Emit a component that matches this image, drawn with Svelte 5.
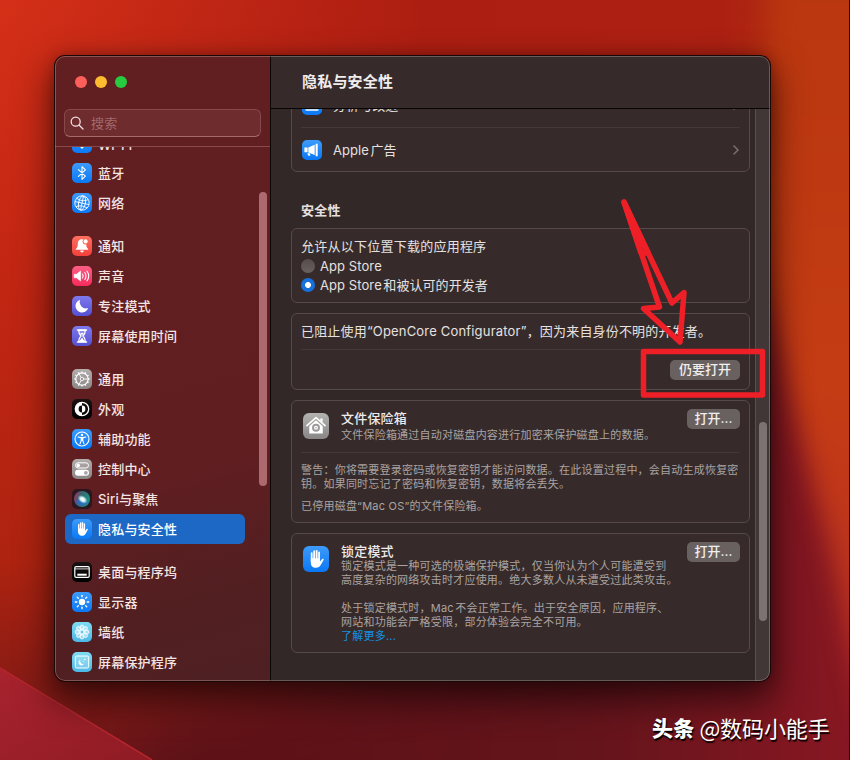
<script>
    let selected = $state("privacy");
    let source = $state("identified");

    const groups = [
        [
            { id: "wifi", label: "Wi-Fi" },
            { id: "bluetooth", label: "蓝牙" },
            { id: "network", label: "网络" }
        ],
        [
            { id: "bell", label: "通知" },
            { id: "sound", label: "声音" },
            { id: "focus", label: "专注模式" },
            { id: "time", label: "屏幕使用时间" }
        ],
        [
            { id: "general", label: "通用" },
            { id: "look", label: "外观" },
            { id: "access", label: "辅助功能" },
            { id: "control", label: "控制中心" },
            { id: "siri", label: "Siri与聚焦" },
            { id: "privacy", label: "隐私与安全性" }
        ],
        [
            { id: "dock", label: "桌面与程序坞" },
            { id: "display", label: "显示器" },
            { id: "wallpaper", label: "墙纸" },
            { id: "saver", label: "屏幕保护程序" }
        ]
    ];

    const petals = [0, 45, 90, 135, 180, 225, 270, 315];
    const teeth = [0, 30, 60, 90, 120, 150, 180, 210, 240, 270, 300, 330];
</script>

{#snippet hand()}
    <path d="M6.7 11.6V5.6M8.6 10.5V4M10.5 10.5V3.7M12.4 11V4.9" stroke="#fff" stroke-width="1.4" stroke-linecap="round" fill="none" />
    <path d="M6 9.5h7.1v2.5l1.5-1.9c.6-.7 1.6-.2 1.2.7l-2.2 3.9c-.8 1.5-1.8 2.1-3.6 2.1-2.6 0-4-1.6-4-4.2z" fill="#fff" />
{/snippet}

{#snippet icon(id)}
    <svg class="icon {id}" viewBox="0 0 20 20">
        {#if id === "wifi"}
            <path d="M3 8a10 10 0 0 1 14 0M5.5 11a6.4 6.4 0 0 1 9 0" stroke="#fff" stroke-width="1.6" fill="none" />
            <path d="M7.5 13.2a3.6 3.6 0 0 1 5 0L10 16z" fill="#fff" />
        {:else if id === "bluetooth"}
            <path d="M6.4 6.7l7 6.5L10 16.3V3.7l3.4 3.1-7 6.5" stroke="#fff" stroke-width="1.1" fill="none" stroke-linejoin="round" stroke-linecap="round" />
        {:else if id === "network"}
            <g stroke="#fff" stroke-width=".9" fill="none">
                <circle cx="10" cy="10" r="7.2" />
                <ellipse cx="10" cy="10" rx="3.4" ry="7.2" transform="rotate(12 10 10)" />
                <path d="M11.5 3 8.5 17M3 8.6l14 3M4.7 5.1c3 2.6 7.2 3.4 11.3 1.5M4 13.6c3.4-1.4 7.4-1 11.2 1.4" />
            </g>
        {:else if id === "bell"}
            <path d="M10 3.2c-2.8 0-4.2 1.9-4.2 4.3 0 3-.5 4.1-2 5.4-.3.4 0 .9.5.9h11.4c.5 0 .8-.5.5-.9-1.5-1.3-2-2.4-2-5.4 0-2.4-1.4-4.3-4.2-4.3z" fill="#fff" />
            <path d="M8.2 14.6h3.6a1.8 2 0 0 1-3.6 0z" fill="#fff" />
            <circle cx="13.6" cy="5.4" r="3" fill="#fb6553" />
            <circle cx="13.6" cy="5.4" r="2.1" fill="#fff" />
        {:else if id === "sound"}
            <path d="M2.2 8.2h2.3L8.6 5v10l-4.1-3.2H2.2z" fill="#fff" stroke="#fff" stroke-width=".6" stroke-linejoin="round" />
            <path d="M10.6 8q1.3 2 0 4M12.8 6.5q2.4 3.5 0 7M15 5.2q3.4 4.8 0 9.6" stroke="#fff" stroke-width="1.1" fill="none" stroke-linecap="round" />
        {:else if id === "focus"}
            <path d="M8.2 3.7A6.5 6.5 0 1 0 16.2 12 6.3 6.3 0 0 1 8.2 3.7z" fill="#fff" />
        {:else if id === "time"}
            <path d="M5.6 4h8.8M5.6 16h8.8" stroke="#fff" stroke-width="1.7" stroke-linecap="round" />
            <path d="M6.7 4.5c0 3 .8 4 2.3 5.5-1.5 1.5-2.3 2.5-2.3 5.5h6.6c0-3-.8-4-2.3-5.5 1.5-1.5 2.3-2.5 2.3-5.5z" stroke="#fff" fill="none" stroke-width="1.3" />
            <path d="M8 6.8h4L10 9.6zM10 11.5l2.5 3.6h-5z" fill="#fff" />
        {:else if id === "general"}
            <circle cx="10" cy="10" r="6.2" stroke="#fff" stroke-width="1.2" fill="none" />
            {#each teeth as a}
                <path d="M10 2.4v1.5" stroke="#fff" stroke-width="1.3" transform="rotate({a} 10 10)" />
            {/each}
            <circle cx="10" cy="10" r="1.7" stroke="#fff" stroke-width=".8" fill="none" />
            <path d="M11.7 10h4.2M9.2 8.5 7 4.8M9.2 11.5 7 15.2" stroke="#fff" stroke-width=".9" />
        {:else if id === "look"}
            <circle cx="10" cy="10" r="6.7" fill="none" stroke="#fff" stroke-width="1.3" />
            <path d="M10 3.3a6.7 6.7 0 0 0 0 13.4v-3.3a3.4 3.4 0 0 1 0-6.8z" fill="#fff" />
            <path d="M10 6.6a3.4 3.4 0 0 1 0 6.8z" fill="#fff" />
        {:else if id === "access"}
            <circle cx="10" cy="10" r="7" fill="none" stroke="#fff" stroke-width="1.1" />
            <circle cx="10" cy="6" r="1.2" fill="#fff" />
            <path d="M6.1 8l2.8.6h2.2l2.8-.6M10 8.8v2.4M9.2 8.8v2.8L8 14.9M10.8 8.8v2.8l1.2 3.3" stroke="#fff" fill="none" stroke-width="1.1" stroke-linecap="round" />
        {:else if id === "control"}
            <rect x="3.5" y="3.8" width="13" height="5.2" rx="2.6" fill="none" stroke="#fff" />
            <circle cx="6.2" cy="6.4" r="1.8" fill="#fff" />
            <rect x="3" y="10.8" width="14" height="6" rx="3" fill="#fff" />
            <circle cx="13.9" cy="13.8" r="1.9" fill="#a9a6a5" />
        {:else if id === "siri"}
            <defs>
                <linearGradient id="orb" x1="0" y1="0" x2="1" y2=".3">
                    <stop offset="0" stop-color="#b32a5c" />
                    <stop offset=".45" stop-color="#3b6470" />
                    <stop offset="1" stop-color="#1f8f80" />
                </linearGradient>
                <radialGradient id="glow">
                    <stop offset="0" stop-color="#fff" />
                    <stop offset=".45" stop-color="#eff" stop-opacity=".9" />
                    <stop offset="1" stop-color="#8ef" stop-opacity="0" />
                </radialGradient>
            </defs>
            <circle cx="10" cy="10" r="8" fill="url(#orb)" />
            <path d="M3.5 13c3 5 10 5 13-.5-4 1-8-.5-10-2.500z" fill="#2b66d8" opacity=".6" />
            <ellipse cx="10.6" cy="10.4" rx="5.6" ry="3.8" transform="rotate(35 10.6 10.4)" fill="url(#glow)" />
        {:else if id === "privacy" || id === "lockdown"}
            {@render hand()}
        {:else if id === "dock"}
            <rect x="2.8" y="4.6" width="14.4" height="10.8" rx="1.4" fill="none" stroke="#fff" stroke-width="1.2" />
            <path d="M3 6.9h14" stroke="#fff" stroke-width=".8" />
            <rect x="5.3" y="11.7" width="9.4" height="2" fill="#fff" />
        {:else if id === "display"}
            <circle cx="10" cy="10" r="3.2" fill="#fff" />
            {#each petals as a}
                <path d="M10 3.3v1.5" stroke="#fff" stroke-width="1.3" stroke-linecap="round" transform="rotate({a} 10 10)" />
            {/each}
        {:else if id === "wallpaper"}
            {#each petals as a}
                <ellipse cx="10" cy="5.5" rx="2" ry="2.5" fill="#fff" fill-opacity=".45" stroke="#fff" stroke-width=".8" transform="rotate({a} 10 10)" />
            {/each}
            <circle cx="10" cy="10" r="1.9" fill="#63c9ee" stroke="#fff" stroke-width=".8" />
        {:else if id === "saver"}
            <rect x="3.3" y="4" width="13.4" height="12" rx="1.3" fill="#fff" fill-opacity=".2" stroke="#fff" stroke-width="1" />
            <path d="M8.3 7.8a2.9 2.9 0 1 0 3.7 4 3 3 0 0 1-3.700-4z" fill="#fff" />
            <circle cx="12.8" cy="7.5" r=".8" fill="#fff" />
            <circle cx="11.2" cy="9.3" r=".5" fill="#fff" />
        {:else if id === "analytics"}
            <rect x="3.5" y="4" width="13" height="12" rx="1" fill="#fff" fill-opacity=".75" />
            <path d="M3.5 13h13" stroke="#2a8df5" stroke-width="1" />
        {:else if id === "ads"}
            <path d="M2.4 7.6h3.2v4.6H2.4zM6.3 7.4l6.4-2.600v10.200l-6.400-2.600zM13.600 3.700h2.100v12.500h-2.100z" fill="#fff" />
            <path d="M5.2 13.2h2.5l.7 2.600H6.400z" fill="#fff" />
        {:else if id === "vault"}
            <path d="M3 9.7 10 3.5l7 6.200" stroke="#fff" stroke-width="1.2" fill="none" stroke-linecap="round" stroke-linejoin="round" />
            <path d="M13.3 4.2h1.8v3l-1.800-1.400z" fill="#fff" />
            <path d="M4.8 10.1l5.2-4.600 5.200 4.600v5.700H4.800z" fill="#fff" />
            <circle cx="10" cy="11.4" r="2.3" fill="none" stroke="#9c9a9a" stroke-width="1.5" />
            <circle cx="10" cy="11.4" r=".6" fill="#9c9a9a" />
        {/if}
    </svg>
{/snippet}

{#snippet chevron()}
    <svg class="chevron" viewBox="0 0 6 10"><path d="M1 1l4 4-4 4" /></svg>
{/snippet}

<div class="desktop">
    <svg class="wallpaper-art" viewBox="0 0 850 760" preserveAspectRatio="none">
        <defs>
            <linearGradient id="base" x1="0" y1="0" x2=".25" y2="1">
                <stop offset="0" stop-color="#d53018" />
                <stop offset=".35" stop-color="#c22613" />
                <stop offset=".7" stop-color="#ad2310" />
                <stop offset="1" stop-color="#64141a" />
            </linearGradient>
            <linearGradient id="top" x1="0" y1="0" x2="1" y2="0">
                <stop offset="0" stop-color="#ad1e12" stop-opacity="0" />
                <stop offset=".5" stop-color="#ad1e12" />
                <stop offset=".85" stop-color="#ac2012" />
                <stop offset="1" stop-color="#b83a10" />
            </linearGradient>
            <linearGradient id="orange" x1="0" y1="0" x2="0" y2="1">
                <stop offset="0" stop-color="#b8360e" />
                <stop offset=".55" stop-color="#c43c14" />
                <stop offset="1" stop-color="#b52b28" />
            </linearGradient>
            <linearGradient id="corner" x1="0" y1="0" x2="1" y2="1">
                <stop offset="0" stop-color="#a8232e" />
                <stop offset="1" stop-color="#8f1b24" />
            </linearGradient>
            <linearGradient id="wine" gradientUnits="userSpaceOnUse" x1="200" y1="0" x2="850" y2="0">
                <stop offset="0" stop-color="#5c1217" />
                <stop offset=".6" stop-color="#64141b" />
                <stop offset="1" stop-color="#881722" />
            </linearGradient>
            <filter id="soft" filterUnits="userSpaceOnUse" color-interpolation-filters="sRGB" x="-200" y="-200" width="1300" height="1200"><feGaussianBlur stdDeviation="12" /></filter>
            <filter id="softer" filterUnits="userSpaceOnUse" color-interpolation-filters="sRGB" x="-200" y="-200" width="1300" height="1200"><feGaussianBlur stdDeviation="30" /></filter>
        </defs>
        <rect width="850" height="760" fill="url(#base)" />
        <rect width="850" height="400" fill="url(#top)" />
        <path d="M150 740 L600 640 L715 300 L950 300 V900 H150 Z" fill="url(#wine)" filter="url(#softer)" />
        <path d="M775 -60 L762 200 C775 390 826 500 848 640 L880 760 H930 V-60 Z" fill="url(#orange)" filter="url(#soft)" />
        <path d="M0 668 L152 760 H0 Z" fill="url(#corner)" />
        <path d="M0 668 L152 760" stroke="#b3262c" stroke-width="1.5" />
        <rect x="849" width="1" height="760" fill="#2c0c09" />
    </svg>

    <div class="window">
        <aside>
            <div class="side-top">
                <div class="lights"><i class="red"></i><i class="yellow"></i><i class="green"></i></div>
                <div class="search">
                    <svg viewBox="0 0 14 14"><circle cx="5.7" cy="5.7" r="4.5" /><path d="M9 9l4 4" /></svg>
                    <span>搜索</span>
                </div>
            </div>
            <div class="side-body">
                <nav>
                    {#each groups as group}
                        <div class="group">
                            {#each group as item}
                                <button class="item" class:active={selected === item.id} onclick={() => (selected = item.id)}>
                                    {@render icon(item.id)}
                                    <span>{item.label}</span>
                                </button>
                            {/each}
                        </div>
                    {/each}
                </nav>
                <div class="side-thumb"></div>
            </div>
        </aside>

        <main>
            <header><h1>隐私与安全性</h1></header>
            <div class="body">
                <div class="content">
                    <section class="card links">
                        <div class="link">{@render icon("analytics")}<span>分析与改进</span>{@render chevron()}</div>
                        <div class="link">{@render icon("ads")}<span>Apple<b class="thin"></b>广告</span>{@render chevron()}</div>
                    </section>

                    <h2>安全性</h2>

                    <section class="card sources">
                        <div class="row">允许从以下位置下载的应用程序</div>
                        <label class="radio">
                            <input type="radio" bind:group={source} value="store" />
                            <span>App Store</span>
                        </label>
                        <label class="radio">
                            <input type="radio" bind:group={source} value="identified" />
                            <span>App Store<b class="thin"></b>和被认可的开发者</span>
                        </label>
                    </section>

                    <section class="card blocked">
                        <div class="message">已阻止使用“OpenCore Configurator”，因为来自身份不明的开发者。</div>
                        <div class="actions"><button class="push wide">仍要打开</button></div>
                    </section>

                    <section class="card vault-card">
                        <div class="feature">
                            {@render icon("vault")}
                            <div class="text">
                                <h3>文件保险箱</h3>
                                <p>文件保险箱通过自动对磁盘内容进行加密来保护磁盘上的数据。</p>
                            </div>
                            <button class="push">打开...</button>
                        </div>
                        <div class="notes">
                            <p>警告：你将需要登录密码或恢复密钥才能访问数据。在此设置过程中，会自动生成恢复密<br />钥。如果同时忘记了密码和恢复密钥，数据将会丢失。</p>
                            <p>已停用磁盘“Mac OS”的文件保险箱。</p>
                        </div>
                    </section>

                    <section class="card lock-card">
                        <div class="feature">
                            {@render icon("lockdown")}
                            <div class="text">
                                <h3>锁定模式</h3>
                                <p>锁定模式是一种可选的极端保护模式，仅当你认为个人可能遭受到<br />高度复杂的网络攻击时才应使用。绝大多数人从未遭受过此类攻击。</p>
                                <p class="second">处于锁定模式时，Mac<b class="thin"></b>不会正常工作。出于安全原因，应用程序、<br />网站和功能会严格受限，部分体验会完全不可用。</p>
                                <p class="more">了解更多...</p>
                            </div>
                            <button class="push">打开...</button>
                        </div>
                    </section>
                </div>
                <div class="track"><div class="thumb"></div></div>
            </div>
        </main>
    </div>

    <svg class="markup" viewBox="0 0 850 760">
        <path d="M624 202 L659.5 307 L643.5 308.5 L680 342 L684 292.5 L672 303 Z" />
        <path d="M624 202 L641 253 L648 253 Z" />
        <rect x="643.5" y="351.5" width="119" height="43.5" />
    </svg>

    <div class="watermark"><strong>头条</strong><span>@数码小能手</span></div>
</div>

<style>
    :global(body) {
        margin: 0;
    }

    .desktop {
        position: relative;
        box-sizing: border-box;
        width: 850px;
        height: 760px;
        padding: 56px 0 0 55px;
        overflow: hidden;
        font-family: Inter, "Noto Sans CJK SC", sans-serif;
        font-size: 13px;
        color: #e6e1e0;
        letter-spacing: 0.2px;
    }

    .wallpaper-art,
    .markup {
        position: absolute;
        left: 0;
        top: 0;
        width: 850px;
        height: 760px;
    }

    .markup {
        pointer-events: none;
        fill: none;
        stroke: #ee1f27;
        stroke-width: 5.5;
        stroke-linejoin: round;
    }

    .window {
        position: relative;
        display: flex;
        box-sizing: border-box;
        width: 715px;
        height: 625px;
        border-radius: 10px;
        overflow: hidden;
        box-shadow: 0 0 0 1px #1c0707, 0 16px 34px 4px rgba(0, 0, 0, 0.55), 0 0 14px rgba(0, 0, 0, 0.25);
    }

    /* thin light rim over both panes */
    .window::after {
        content: "";
        position: absolute;
        inset: 0;
        border: 1px solid rgba(255, 235, 225, 0.26);
        border-radius: 10px;
        pointer-events: none;
    }

    aside {
        display: flex;
        flex-direction: column;
        width: 215px;
        background: linear-gradient(165deg, #611f22 0%, #611e21 65%, #521f21 85%, #4e2023 100%);
        border-right: 1px solid #0d0606;
    }

    .side-top {
        box-sizing: border-box;
        height: 91px;
        padding: 20px 9px 0;
        border-bottom: 1px solid #88494c;
    }

    .lights {
        display: flex;
        gap: 8px;
        padding-left: 11px;
    }

    .lights i {
        width: 12px;
        height: 12px;
        border-radius: 50%;
    }

    .red { background: #ff5f5b; }
    .yellow { background: #fdbc2f; }
    .green { background: #27cb3f; }

    .search {
        display: flex;
        align-items: center;
        box-sizing: border-box;
        height: 28px;
        margin-top: 21px;
        padding: 0 0 1px 5px;
        gap: 7px;
        border: 1px solid #88494c;
        border-bottom-color: #a46b6d;
        border-radius: 6px;
        background: #6e2c2f;
        color: #a4686a;
    }

    .search svg {
        width: 14px;
        height: 14px;
        fill: none;
        stroke: #f3dfdf;
        stroke-width: 1.3;
        stroke-linecap: round;
    }

    .side-body {
        display: flex;
        flex: 1;
        min-height: 0;
        overflow: hidden;
    }

    nav {
        width: 180px;
        margin: -19px 14px 0 10px;
    }

    .group {
        margin-bottom: 13px;
    }

    .item {
        display: flex;
        align-items: center;
        gap: 6px;
        width: 100%;
        height: 30px;
        padding: 0 7px;
        border: none;
        border-radius: 6px;
        background: none;
        color: #f4e4e3;
        font: inherit;
        font-weight: 500;
        letter-spacing: inherit;
    }

    .item span {
        padding-bottom: 2px;
    }

    /* latin-only label sits lower than the hanzi ones */
    .group:first-child .item:first-child span {
        padding: 3px 0 0;
    }

    .item.active {
        background: #1d68c5;
        color: #fff;
    }

    .side-thumb {
        width: 8px;
        height: 294px;
        margin-top: 45px;
        border-radius: 4px;
        background: #ac6a6e;
    }

    .icon {
        flex: none;
        width: 20px;
        height: 20px;
        border-radius: 5px;
        background: linear-gradient(#3d9bfb, #0a78f5);
    }

    .bell { background: linear-gradient(#fc7060, #f4403a); }
    .sound { background: linear-gradient(#fd5f86, #f62a5c); }
    .focus, .time { background: linear-gradient(#7f79ee, #5450d2); }
    .general, .control { background: linear-gradient(#b3adac, #8b8686); }
    .look, .dock { background: linear-gradient(#1b1212, #000); }
    .siri { background: #2a1722; }
    .wallpaper, .saver { background: linear-gradient(#7edcf4, #4bb8e6); }

    .vault, .lockdown {
        width: 26px;
        height: 26px;
        border-radius: 6px;
    }

    .vault { background: linear-gradient(#b4b1b1, #888686); }

    main {
        flex: 1;
        display: flex;
        flex-direction: column;
        min-width: 0;
        background: #322827;
    }

    header {
        box-sizing: border-box;
        height: 53px;
        padding: 15px 0 0 31px;
        background: #362b2a;
        border-bottom: 1px solid #070404;
    }

    h1, h2, h3, p {
        margin: 0;
        font-size: 13px;
    }

    h1 {
        font-size: 15px;
        line-height: 22px;
        letter-spacing: 0.2px;
        color: #f1eded;
    }

    .body {
        display: flex;
        flex: 1;
        min-height: 0;
        overflow: hidden;
    }

    .content {
        width: 459px;
        margin: -28px 5px 0 20px;
    }

    .card {
        box-sizing: border-box;
        border: 1px solid #564b4a;
        border-radius: 6px;
        background: #362b2a;
        padding: 0 9px;
        margin-bottom: 10px;
    }

    .link {
        display: flex;
        align-items: center;
        box-sizing: border-box;
        height: 45px;
        padding: 0 1px;
        gap: 11px;
        letter-spacing: 0.05px;
    }

    .link + .link {
        height: 44px;
        border-top: 1px solid #443938;
    }

    .link span {
        flex: 1;
    }

    .thin {
        display: inline-block;
        width: 1.5px;
    }

    .chevron {
        width: 6px;
        height: 10px;
        fill: none;
        stroke: #7a706f;
        stroke-width: 1.5;
        stroke-linecap: round;
    }

    h2 {
        line-height: 20px;
        margin: 28px 0 8px 10px;
    }

    .links {
        margin: 0;
    }

    .sources {
        height: 75px;
        padding-top: 7px;
    }

    .row {
        line-height: 20px;
        letter-spacing: 0.24px;
    }

    .radio {
        display: flex;
        align-items: center;
        height: 19px;
        gap: 5px;
        letter-spacing: 0.08px;
    }

    .radio input {
        appearance: none;
        width: 14px;
        height: 14px;
        margin: 0;
        border-radius: 50%;
        background: linear-gradient(#544b4a, #696160);
    }

    .radio input:checked {
        background: radial-gradient(circle, #fff 2.6px, #1670dc 3.3px);
    }

    .blocked {
        height: 77px;
    }

    .message {
        box-sizing: border-box;
        height: 36px;
        line-height: 34px;
        border-bottom: 1px solid #443938;
        letter-spacing: 0.18px;
        white-space: nowrap;
    }

    .actions {
        display: flex;
        justify-content: flex-end;
        padding-top: 10px;
    }

    .push {
        flex: none;
        width: 53px;
        height: 20px;
        padding: 0 0 2px;
        border: none;
        border-radius: 5px;
        background: #696160;
        color: #f1eeee;
        font: inherit;
        font-weight: 500;
        line-height: 18px;
    }

    .push.wide {
        width: 70px;
    }

    .feature {
        display: flex;
        align-items: flex-start;
    }

    .feature .icon {
        margin: 4px 12px 0 2px;
    }

    .feature .text {
        flex: 1;
        white-space: nowrap;
    }

    h3 {
        font-weight: 500;
        line-height: 18px;
        color: #eeeaea;
    }

    p {
        font-size: 11px;
        line-height: 14px;
        letter-spacing: 0.22px;
        color: #aaa3a2;
        white-space: nowrap;
    }

    .vault-card {
        height: 123px;
        padding-top: 8px;
    }

    .vault-card .feature {
        box-sizing: border-box;
        height: 44px;
        border-bottom: 1px solid #443938;
    }

    .vault-card .feature p {
        padding-top: 1px;
    }

    .notes {
        display: flex;
        flex-direction: column;
        gap: 8px;
        padding-top: 10px;
    }

    .lock-card {
        height: 120px;
        padding-top: 8px;
    }

    .lock-card h3 {
        margin-bottom: -1px;
    }

    .second {
        margin-top: 14px;
    }

    .more {
        color: #1292e0;
    }

    .track {
        flex: 1;
        border-left: 1px solid #5a4f4e;
        background: #413736;
    }

    .thumb {
        width: 8px;
        height: 199px;
        margin: 313px 0 0 3px;
        border-radius: 4px;
        background: #7b7271;
    }

    .watermark {
        position: absolute;
        left: 652px;
        top: 712px;
        display: flex;
        align-items: center;
        gap: 5px;
        height: 30px;
        color: #fff;
        font-family: "Noto Sans CJK SC", sans-serif;
        font-size: 21px;
        letter-spacing: 0.2px;
        white-space: nowrap;
        text-shadow: 1px 2px 1px #000;
    }

    .watermark strong {
        font-weight: 900;
    }

    .watermark span {
        font-size: 22px;
        letter-spacing: -0.1px;
    }
</style>
